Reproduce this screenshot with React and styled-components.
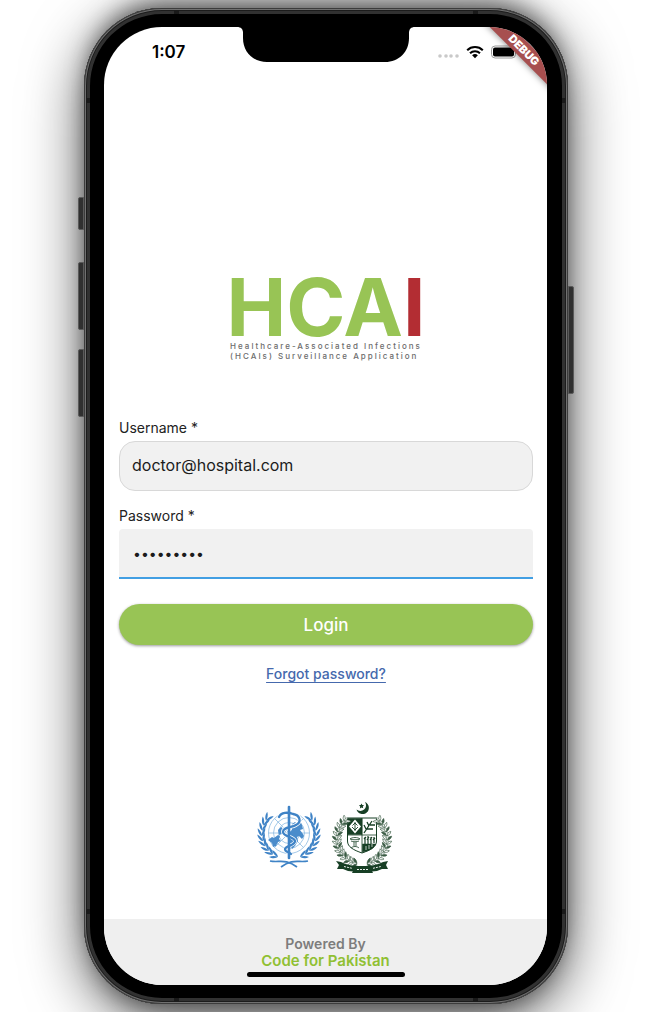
import React from "react";
import styled, { createGlobalStyle } from "styled-components";

const GlobalStyle = createGlobalStyle`
  *, *::before, *::after { box-sizing: border-box; }
  body {
    margin: 0;
    background: #fff;
    font-family: Inter, "Liberation Sans", sans-serif;
  }
`;

const Stage = styled.div`
  display: flex;
  min-height: 100vh;
  padding: 8px 82px 8px 84px;
  overflow: hidden;
`;

const Phone = styled.div`
  position: relative;
  display: flex;
  flex: 1;
  padding: 19px 21px 19px 20px;
  border-radius: 78px;
  background: #000;
  box-shadow:
    inset 0 0 0 1px #3c3c3c,
    inset 0 0 0 2px #707070,
    inset 0 0 0 3px #1c1c1c,
    inset 0 0 0 6px #313131,
    0 14px 60px rgba(0, 0, 0, 0.66),
    0 -14px 24px -8px rgba(0, 0, 0, 0.55),
    0 14px 24px -10px rgba(0, 0, 0, 0.4);
`;

const SideKey = styled.span`
  position: absolute;
  top: ${(p) => p.$top}px;
  ${(p) => p.$side}: -6px;
  width: 6px;
  height: ${(p) => p.$length}px;
  border: 1px solid #5a5a5a;
  border-radius: ${(p) => (p.$side === "left" ? "2px 0 0 2px" : "0 2px 2px 0")};
  background: #303030;
`;

const AntennaLine = styled.span`
  position: absolute;
  ${(p) => p.$edge}: 2px;
  ${(p) => p.$from}: 90px;
  width: ${(p) => (p.$edge === "left" || p.$edge === "right" ? 4 : 5)}px;
  height: ${(p) => (p.$edge === "left" || p.$edge === "right" ? 5 : 4)}px;
  background: #1a1a1a;
`;

const Screen = styled.div`
  position: relative;
  display: flex;
  flex: 1;
  flex-direction: column;
  overflow: hidden;
  border-radius: 58px;
  background: #fff;
`;

const StatusBar = styled.header`
  display: flex;
  align-items: center;
  justify-content: space-between;
  height: 50px;
  padding: 0 28px 0 48px;
`;

const Clock = styled.time`
  font-size: 17px;
  font-weight: 600;
  line-height: 20px;
  color: #000;
`;

const StatusIcons = styled.div`
  display: flex;
  align-items: center;
  gap: 7px;
`;

const Notch = styled.svg`
  position: absolute;
  top: 0;
  left: 50%;
  width: 178px;
  height: 35px;
  transform: translateX(-50%);
`;

const DebugRibbon = styled.div`
  position: absolute;
  top: 15px;
  right: -37px;
  width: 120px;
  height: 16px;
  background: #a74f4f;
  box-shadow: 0 0 7px rgba(0, 0, 0, 0.5);
  color: #fff;
  font-size: 11px;
  font-weight: 900;
  line-height: 16px;
  text-align: center;
  transform: rotate(45deg);
`;

const Main = styled.main`
  display: flex;
  flex: 1;
  flex-direction: column;
  padding: 196px 14px 44px 15px;
`;

const Brand = styled.div`
  display: flex;
  flex-direction: column;
  align-items: center;
  margin-bottom: 57px;
`;

const Wordmark = styled.h1`
  margin: 0;
  color: #98c455;
  font-size: 80px;
  font-weight: 700;
  line-height: 68px;
`;

const RedLetter = styled.span`
  color: #b32d33;
`;

const Tagline = styled.p`
  margin: 0;
  color: #6c6c6c;
  font-size: 8px;
  font-weight: 500;
  letter-spacing: 2px;
  line-height: 10px;
`;

const LoginForm = styled.form`
  display: flex;
  flex-direction: column;
`;

const FieldLabel = styled.label`
  margin-bottom: 3px;
  color: #222;
  font-size: 14px;
  line-height: 20px;
`;

const Field = styled.input`
  width: 100%;
  height: 50px;
  margin: 0 0 15px;
  padding: 0 12px 2px;
  border: 1px solid #d8d8d8;
  border-radius: 16px;
  outline: none;
  background: #f1f1f1;
  color: #1c1c1c;
  font: 400 16px/20px Inter, "Liberation Sans", sans-serif;
`;

const ActiveField = styled(Field)`
  margin-bottom: 25px;
  padding: 0 14px;
  border: 0;
  border-bottom: 2px solid #429fe3;
  border-radius: 4px 4px 0 0;
  font-size: 14px;
`;

const LoginButton = styled.button`
  height: 41px;
  padding: 0;
  border: 0;
  border-radius: 21px;
  background: #98c455;
  box-shadow: 0 1px 3px rgba(0, 0, 0, 0.4);
  color: #fff;
  font: 500 17px/20px Inter, "Liberation Sans", sans-serif;
`;

const ForgotLink = styled.a`
  align-self: center;
  margin-top: 19px;
  color: #4569ad;
  font-size: 14px;
  font-weight: 500;
  line-height: 20px;
  text-underline-offset: 3px;
`;

const Emblems = styled.div`
  display: flex;
  align-items: center;
  justify-content: center;
  gap: 8px;
  margin-top: auto;
`;

const Footer = styled.footer`
  display: flex;
  flex-direction: column;
  align-items: center;
  padding: 16px 0 8px;
  background: #efefef;
  font-weight: 600;
  line-height: 17px;
`;

const PoweredBy = styled.span`
  color: #7d7d7d;
  font-size: 14px;
`;

const Company = styled.span`
  color: #90c033;
  font-size: 15px;
`;

const HomeIndicator = styled.span`
  width: 158px;
  height: 5px;
  margin-top: 3px;
  border-radius: 3px;
  background: #000;
`;

const SignalDots = () => (
  <svg width="21" height="14" viewBox="0 0 21 14" aria-hidden="true">
    {[2, 8, 13, 19].map((x) => (
      <circle key={x} cx={x} cy="11" r="1.8" fill="#c9c9c9" />
    ))}
  </svg>
);

const WifiIcon = () => (
  <svg width="18" height="14" viewBox="0 0 18 14" aria-hidden="true">
    <g fill="none" stroke="#000" strokeWidth="2.1">
      <path d="M1.2 5.2a11.2 11.2 0 0 1 15.6 0" />
      <path d="M4 8.2a7.2 7.2 0 0 1 10 0" />
    </g>
    <path d="M9 13.2 6.1 10.3a4.2 4.2 0 0 1 5.8 0z" fill="#000" />
  </svg>
);

const BatteryIcon = () => (
  <svg width="28" height="14" viewBox="0 0 28 14" aria-hidden="true">
    <rect x="0.5" y="1" width="24" height="12" rx="3.6" fill="none" stroke="#9a9a9a" />
    <rect x="2" y="2.5" width="21" height="9" rx="2" fill="#000" />
    <path d="M26 5v4c1-.3 1.500-1 1.500-2S27 5.300 26 5z" fill="#9a9a9a" />
  </svg>
);

const LEAF = "M0 0C1.500-2 5.500-3 9-0.500C6 1.500 2.500 1.500 0 0z";

const laurel = (cx, cy, rx, ry, from, to, count) =>
  Array.from({ length: count }, (_, i) => {
    const t = ((from + ((to - from) * i) / (count - 1)) * Math.PI) / 180;
    return {
      x: cx - rx * Math.sin(t),
      y: cy + ry * Math.cos(t),
      turn: (Math.atan2(-Math.sin(t), -Math.cos(t)) * 180) / Math.PI,
    };
  });

const WHO_LEAVES = laurel(32, 29, 27, 25, 24, 122, 9);

const HealthEmblem = () => (
  <svg width="64" height="66" viewBox="0 0 64 66" role="img" aria-label="World Health Organization">
    <g fill="none" stroke="#8dbbe2" strokeWidth="0.8">
      <circle cx="32" cy="28" r="20.500" />
      <circle cx="32" cy="28" r="15.500" />
      <circle cx="32" cy="28" r="10.500" />
      <circle cx="32" cy="28" r="5" />
      <path d="M11.500 28h41M17.500 13.500l29 29M46.500 13.500l-29 29" />
    </g>
    <g fill="#4a8ccb">
      <path d="M11 35l4-3 2 1 4-3 2 1-1 3 2 2-3 1-2 4-3 1-1-4z" />
      <path d="M35 19l3-2 2 2 3-3 2 4 1 4-3 1 3 4 1 2-2 3-3-3-2 1 1 4-3 5-3 3-2-5-1-4 2-4-2-3 3-3z" />
      <path d="M21 25l3-3 3 2 2 3-4 2-3 1z" />
    </g>
    <path
      d="M22 12c2-5 9-5 14-3 7 1 9 8 3 11-5 3-13 2-13 7s11 4 12 9c0 5-9 4-10 8 0 3 4 3 6 5"
      fill="none"
      stroke="#fff"
      strokeWidth="3.800"
    />
    <path
      d="M22 12c2-5 9-5 14-3 7 1 9 8 3 11-5 3-13 2-13 7s11 4 12 9c0 5-9 4-10 8 0 3 4 3 6 5"
      fill="none"
      stroke="#3f83c6"
      strokeWidth="2.300"
      strokeLinecap="round"
    />
    <path d="M32 2v51" stroke="#3f83c6" strokeWidth="2.600" strokeLinecap="round" />
    {[false, true].map((mirrored) => (
      <g key={String(mirrored)} transform={mirrored ? "translate(64 0) scale(-1 1)" : undefined} fill="#3f83c6">
        {WHO_LEAVES.map((leaf) => (
          <g key={leaf.turn} transform={`translate(${leaf.x} ${leaf.y})`}>
            <path d={LEAF} transform={`rotate(${leaf.turn - 22}) scale(1 .75)`} />
            <path d={LEAF} transform={`rotate(${leaf.turn + 28}) scale(1 .75)`} />
          </g>
        ))}
        <path d="M13 56c9 2 15-3 27 6" fill="none" stroke="#3f83c6" strokeWidth="1.700" />
      </g>
    ))}
  </svg>
);

const STATE_LEAVES = laurel(33, 38, 25, 25, 12, 136, 14);

const StateEmblem = () => (
  <svg width="66" height="74" viewBox="0 0 66 74" role="img" aria-label="Government of Pakistan">
    <g fill="#173f25">
      <path d="M36 1A6.300 6.300 0 1 1 27.500 8.500 5.700 5.700 0 0 0 36 1z" />
      <path d="M32.500 2.500l.8 1.600 1.800.1-1.300 1.300.4 1.800-1.700-.8-1.600.9.300-1.900-1.300-1.200 1.800-.2z" />
    </g>
    <g stroke="#173f25">
      <path d="M18.500 17h29v23c0 6-6 9-14.500 12-8.500-3-14.500-6-14.500-12z" fill="#fff" strokeWidth="1" />
      <path d="M19 17.500h14v16H19z" fill="#173f25" strokeWidth="0.500" />
      <path d="M26 18.500l6 7-6 7-6-7z" fill="#fff" strokeWidth="0" />
      <path d="M26 21v9M23.500 24.500l2.500-2.500 2.500 2.500M23 26l3 3 3-3" fill="none" strokeWidth="0.900" />
      <path d="M33 17v35M18.500 34h29" fill="none" strokeWidth="0.800" />
      <path d="M35 32l8-12M37 28l-2-4M40 25l-2-4M38 28h6M41 24h5" fill="none" strokeWidth="1.300" />
      <path d="M21 38c2-2 8-2 10 0-2 1-8 1-10 0zM22 40c2 1 6 1 8 0M24 42h4M24 44h4M22 47c2-2 6-2 8 0" fill="none" strokeWidth="0.800" />
      <path d="M33.500 43h13c-1 4-6 7-13 8z" fill="#173f25" strokeWidth="0.500" />
      <path d="M36 43v-7M39 43v-8M42 43v-7M45 42v-6M35 38l2-2M38 39l2-3M41 39l2-3M44 39l2-2" fill="none" strokeWidth="1.200" />
      <path d="M37 49v-4M40 48v-4M43 46v-3" fill="none" stroke="#fff" strokeWidth="0.700" />
    </g>
    {[false, true].map((mirrored) => (
      <g key={String(mirrored)} transform={mirrored ? "translate(66 0) scale(-1 1)" : undefined} fill="#fff" stroke="#3b5c45" strokeWidth="0.900">
        {STATE_LEAVES.map((leaf, i) => (
          <g key={leaf.turn} transform={`translate(${leaf.x} ${leaf.y})`}>
            <path d={LEAF} transform={`rotate(${leaf.turn - 48}) scale(.65 .7)`} fill={i % 2 ? "#fff" : "#3b5c45"} />
            <path d={LEAF} transform={`rotate(${leaf.turn + 52}) scale(.7 .7)`} fill={i % 3 ? "#fff" : "#3b5c45"} />
            <path d={LEAF} transform={`rotate(${leaf.turn}) scale(.5 .6)`} />
          </g>
        ))}
      </g>
    ))}
    <g fill="#173f25">
      <path d="M7 60l5 1c6 3 12 4 21 4s15-1 21-4l5-1-2 4 2 4-6 0-5 2-10 1H29l-10-1-5-2-6 0 2-4z" />
      <path d="M25 68h17l2 4H23z" />
    </g>
    <path d="M15 65.500l8 1.800M28 68.500h11M44 67.300l8-1.800" stroke="#fff" strokeWidth="0.900" strokeDasharray="2 1" />
  </svg>
);

const LEFT_KEYS = [
  { top: 189, length: 33 },
  { top: 254, length: 68 },
  { top: 341, length: 68 },
];

const ANTENNA_LINES = [
  ["left", "top"],
  ["left", "bottom"],
  ["right", "top"],
  ["right", "bottom"],
  ["top", "left"],
  ["top", "right"],
  ["bottom", "left"],
  ["bottom", "right"],
];

export default function App() {
  return (
    <>
      <GlobalStyle />
      <Stage>
        <Phone>
          {LEFT_KEYS.map((key) => (
            <SideKey key={key.top} $side="left" $top={key.top} $length={key.length} />
          ))}
          <SideKey $side="right" $top={278} $length={108} />
          {ANTENNA_LINES.map(([edge, from]) => (
            <AntennaLine key={edge + from} $edge={edge} $from={from} />
          ))}
          <Screen>
            <StatusBar>
              <Clock>1:07</Clock>
              <StatusIcons>
                <SignalDots />
                <WifiIcon />
                <BatteryIcon />
              </StatusIcons>
            </StatusBar>
            <Notch viewBox="0 0 178 35" aria-hidden="true">
              <path d="M0 0C4 0 6 2 6 6v5c0 14 10 24 24 24h118c14 0 24-10 24-24V6c0-4 2-6 6-6z" />
            </Notch>
            <Main>
              <Brand>
                <Wordmark>
                  HCA<RedLetter>I</RedLetter>
                </Wordmark>
                <Tagline>
                  Healthcare-Associated Infections
                  <br />
                  (HCAIs) Surveillance Application
                </Tagline>
              </Brand>
              <LoginForm onSubmit={(event) => event.preventDefault()}>
                <FieldLabel htmlFor="username">Username *</FieldLabel>
                <Field id="username" type="text" defaultValue="doctor@hospital.com" />
                <FieldLabel htmlFor="password">Password *</FieldLabel>
                <ActiveField id="password" type="password" defaultValue="infection" />
                <LoginButton type="submit">Login</LoginButton>
                <ForgotLink href="#forgot">Forgot password?</ForgotLink>
              </LoginForm>
              <Emblems>
                <HealthEmblem />
                <StateEmblem />
              </Emblems>
            </Main>
            <Footer>
              <PoweredBy>Powered By</PoweredBy>
              <Company>Code for Pakistan</Company>
              <HomeIndicator />
            </Footer>
            <DebugRibbon>DEBUG</DebugRibbon>
          </Screen>
        </Phone>
      </Stage>
    </>
  );
}
